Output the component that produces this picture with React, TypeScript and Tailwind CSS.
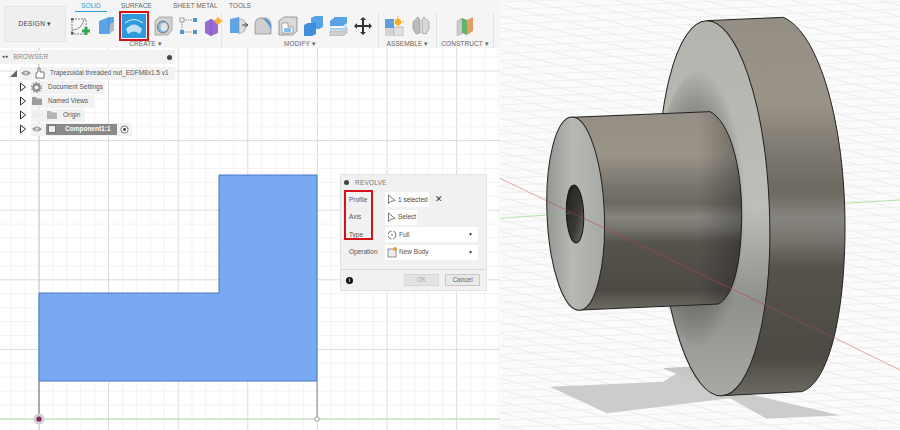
import React from "react";

const font = "font-['Liberation_Sans',Arial,sans-serif]";

const Group = ({ label, children, className }: { label: string; children: React.ReactNode; className: string }) => (
  <div className={`flex flex-col items-center h-[36px] border-r border-[#e2e2e2] ${className}`}>
    <div className="flex items-center h-[26px]">{children}</div>
    <div className="text-[6.5px] leading-[10px] text-[#666] tracking-[0.1px] whitespace-nowrap">{label} ▾</div>
  </div>
);

const Ico = ({ children, w = 20 }: { children: React.ReactNode; w?: number }) => (
  <svg width={w} height={20} viewBox="0 0 20 20" className="shrink-0">{children}</svg>
);

const TreeRow = ({ children, className = "" }: { children: React.ReactNode; className?: string }) => (
  <div className={`flex items-center h-[14px] ${className}`}>{children}</div>
);

const Arrow = () => (
  <svg width="8" height="10" viewBox="0 0 8 10" className="shrink-0"><path d="M1.5 1 L6.5 5 L1.5 9 Z" fill="#fff" stroke="#333" strokeWidth="1" /></svg>
);

const Eye = ({ faint }: { faint?: boolean }) => (
  <svg width="12" height="10" viewBox="0 0 12 10" className="shrink-0">
    <path d="M1 5 Q6 0 11 5 Q6 10 1 5Z" fill={faint ? "#e8e8e8" : "#999"} />
    <circle cx="6" cy="5" r="1.6" fill={faint ? "#f2f2f2" : "#ddd"} />
  </svg>
);

const Folder = ({ faint }: { faint?: boolean }) => (
  <svg width="12" height="10" viewBox="0 0 12 10" className="shrink-0">
    <path d="M1 1 H5 L6 2.5 H11 V9 H1Z" fill={faint ? "#b5b5b5" : "#9d9d9d"} />
  </svg>
);

const Cursor = () => (
  <svg width="9" height="11" viewBox="0 0 9 11" className="shrink-0"><path d="M1.5 1 V9.5 L3.5 7.5 L8 6.5 Z" fill="#fff" stroke="#555" strokeWidth="0.8" /></svg>
);

const Caret = () => <span className="ml-auto mr-[5px] text-[5px] text-[#333]">▼</span>;

const DialogRow = ({ label, children }: { label: string; children: React.ReactNode }) => (
  <div className="flex items-center h-[17.5px]">
    <div className="w-[44px] pl-[8px] text-[6.5px] text-[#555]">{label}</div>
    {children}
  </div>
);

const LeftGrid = () => {
  const xs = Array.from({ length: 37 }, (_, i) => 39 - 13.92 * 2 + i * 13.92);
  const ys = Array.from({ length: 29 }, (_, i) => 419 + 13.92 - i * 13.92);
  return (
    <svg width="500" height="382" viewBox="0 48 500 382" className="absolute inset-0">
      {xs.map((x, i) => <line key={i} x1={x} x2={x} y1="48" y2="430" stroke={(i - 2) % 5 === 0 ? "#dcdcdc" : "#f3f3f3"} strokeWidth="1" />)}
      {ys.map((y, i) => <line key={i} x1="0" x2="500" y1={y} y2={y} stroke={(i - 1) % 5 === 0 ? "#dcdcdc" : "#f3f3f3"} strokeWidth="1" />)}
      <line x1="39" x2="39" y1="48" y2="430" stroke="#c5cfdc" strokeWidth="1" />
      <line x1="0" x2="500" y1="419" y2="419" stroke="#b9e6b0" strokeWidth="1" />
      <path d="M39 293 H219 V175 H317 V381 H39 Z" fill="#79a9f2" stroke="#4a79bd" strokeWidth="1" />
      <line x1="39" x2="39" y1="381" y2="419" stroke="#77777f" strokeWidth="1" />
      <line x1="317" x2="317" y1="381" y2="419" stroke="#8a8a8a" strokeWidth="1" />
      <circle cx="39" cy="419" r="5.5" fill="#cfcfd2" />
      <circle cx="39" cy="419" r="2.6" fill="#8c1d5c" />
      <circle cx="317" cy="419" r="2.2" fill="#fff" stroke="#888" strokeWidth="0.8" />
    </svg>
  );
};

const Model = () => {
  const gridA = Array.from({ length: 62 }, (_, i) => i);
  const gridB = Array.from({ length: 60 }, (_, i) => i);
  return (
    <svg viewBox="0 0 1200 1290" className="w-[400px] h-[430px] block bg-[#fbfbfb]">
      <defs>
        <linearGradient id="cyl" x1="0" y1="0" x2="0" y2="1">
          <stop offset="0" stopColor="#948e84" />
          <stop offset="0.22" stopColor="#9a9388" />
          <stop offset="0.36" stopColor="#7c7870" />
          <stop offset="0.46" stopColor="#6c6961" />
          <stop offset="0.53" stopColor="#86847e" />
          <stop offset="0.58" stopColor="#7a7871" />
          <stop offset="0.66" stopColor="#56534d" />
          <stop offset="0.9" stopColor="#4d4a44" />
          <stop offset="1" stopColor="#6f6c65" />
        </linearGradient>
        <linearGradient id="hubFade" x1="0" y1="0" x2="1" y2="0">
          <stop offset="0" stopColor="#000" stopOpacity="0" />
          <stop offset="0.75" stopColor="#000" stopOpacity="0" />
          <stop offset="1" stopColor="#000" stopOpacity="0.28" />
        </linearGradient>
        <linearGradient id="face" x1="0" y1="0" x2="1" y2="0.15">
          <stop offset="0" stopColor="#8f8f8b" />
          <stop offset="0.5" stopColor="#b8b8b4" />
          <stop offset="1" stopColor="#a9a9a5" />
        </linearGradient>
        <linearGradient id="disc" x1="0" y1="0" x2="0" y2="1">
          <stop offset="0" stopColor="#b4b4ae" />
          <stop offset="0.5" stopColor="#bdbdb9" />
          <stop offset="0.75" stopColor="#8f8f8b" />
          <stop offset="1" stopColor="#a9a9a6" />
        </linearGradient>
        <radialGradient id="discShade" cx="0.42" cy="0.5" r="0.5">
          <stop offset="0.55" stopColor="#3c3c3a" stopOpacity="0.55" />
          <stop offset="1" stopColor="#3c3c3a" stopOpacity="0" />
        </radialGradient>
        <linearGradient id="hole" x1="0" y1="0" x2="1" y2="1">
          <stop offset="0" stopColor="#1e1e1c" />
          <stop offset="0.6" stopColor="#3a3936" />
          <stop offset="1" stopColor="#77756f" />
        </linearGradient>
      </defs>

      {gridB.map((i) => (
        <line key={`b${i}`} x1="-100" y1={-420 + i * 34} x2="1300" y2={-60 + i * 34} stroke="#dedede" strokeWidth="1.5" />
      ))}
      {gridA.map((i) => (
        <line key={`a${i}`} x1="-100" y1={10 + i * 22} x2="1300" y2={-42 + i * 22} stroke="#e4e4e4" strokeWidth="1.5" />
      ))}

      <path d="M150 1160 L490 1145 L560 1100 L490 1105 L590 1142 L760 1185 L1020 1246 L800 1256 L690 1195 L320 1240 Z" fill="#c7c7c5" opacity="0.9" />
      <path d="M488 1105 L570 1100 L660 1150 L590 1145Z" fill="#c7c7c5" />

      <line x1="0" y1="655" x2="210" y2="640" stroke="#b4e2a8" strokeWidth="3" />
      <line x1="1030" y1="610" x2="1200" y2="600" stroke="#b4e2a8" strokeWidth="3" />
      <line x1="0" y1="535" x2="150" y2="607" stroke="#e3a6a6" strokeWidth="3" />
      <line x1="1000" y1="1012" x2="1200" y2="1110" stroke="#e3a6a6" strokeWidth="3" />

      {/* large disc */}
      <path d="M620 62 L850 52 C960 100 1035 380 1035 680 C1035 950 985 1150 905 1175 L665 1187 Z" fill="url(#cyl)" stroke="#222" strokeWidth="3" />
      <ellipse cx="642" cy="625" rx="166" ry="563" transform="rotate(-2.3 642 625)" fill="url(#disc)" stroke="#222" strokeWidth="3" />
      <ellipse cx="610" cy="625" rx="150" ry="420" fill="url(#discShade)" />

      {/* hub */}
      <path d="M215 352 L630 335 C690 365 725 500 725 640 C725 790 700 890 655 912 L240 930 Z" fill="url(#cyl)" stroke="#222" strokeWidth="3" />
      <path d="M215 352 L630 335 C690 365 725 500 725 640 C725 790 700 890 655 912 L240 930 Z" fill="url(#hubFade)" />
      <ellipse cx="227" cy="641" rx="86" ry="290" transform="rotate(-2.3 227 641)" fill="url(#face)" stroke="#222" strokeWidth="3" />
      <ellipse cx="225" cy="642" rx="26" ry="87" transform="rotate(-2.3 225 642)" fill="url(#hole)" stroke="#151515" strokeWidth="3" />

      <line x1="140" y1="602" x2="1000" y2="1012" stroke="#b04a4e" strokeWidth="3" opacity="0.55" />
      <line x1="140" y1="645" x2="210" y2="640" stroke="#8fc98a" strokeWidth="2" opacity="0.5" />
    </svg>
  );
};

export default function App() {
  return (
    <div className={`flex w-[900px] h-[430px] overflow-hidden bg-white ${font}`}>
      <div className="w-[500px] h-[430px] flex flex-col shrink-0">
        {/* toolbar */}
        <div className="h-[48px] flex bg-[#f5f5f5] shrink-0">
          <div className="w-[62px] h-[36px] mt-[6px] ml-[4px] mr-[4px] bg-[#efefef] border border-[#e4e4e4] rounded-[2px] flex items-center justify-center text-[6.5px] text-[#444] tracking-[0.3px]">
            DESIGN ▾
          </div>
          <div className="flex flex-col">
            <div className="flex h-[10px] text-[6.5px] leading-[12px] text-[#666] whitespace-nowrap">
              <div className="w-[32px] ml-[5px] text-center text-[#2b9bd6] border-b border-[#2b9bd6] h-[12px]">SOLID</div>
              <div className="ml-[14px] w-[30px] text-center">SURFACE</div>
              <div className="ml-[22px] w-[42px] text-center">SHEET METAL</div>
              <div className="ml-[14px]">TOOLS</div>
            </div>
            <div className="flex mt-[3px]">
              <Group label="CREATE" className="w-[152px]">
                <div className="flex items-center gap-[5px] pl-[2px]">
                  <Ico>
                    <path d="M2 3 H16 V18 H2Z" fill="none" stroke="#666" strokeWidth="0.8" strokeDasharray="2 1" />
                    <path d="M2 14 Q12 14 14 3" fill="none" stroke="#777" strokeWidth="0.8" />
                    <rect x="1" y="2" width="2.5" height="2.5" fill="#555" /><rect x="1" y="16" width="2.5" height="2.5" fill="#555" />
                    <path d="M12 15 H20 M16 11 V19" stroke="#2fa84f" strokeWidth="3" />
                  </Ico>
                  <Ico>
                    <path d="M4 5 L14 1 H19 V14 L14 18 H4Z" fill="#5aa5e6" />
                    <path d="M14 2 V18" stroke="#3f85c8" strokeWidth="0.8" />
                    <path d="M14 18 L19 14 V6 L15 8Z" fill="#b9b9b9" />
                  </Ico>
                  <div className="relative w-[24px] h-[24px] bg-[#2e9ade] shrink-0 mx-[2px] flex items-center justify-center">
                    <svg width="22" height="22" viewBox="0 0 22 22">
                      <path d="M3 14 Q11 5 19 14 L17 19 Q11 14 5 19Z" fill="#bfe0f5" />
                      <path d="M2 8 Q11 1 20 8" fill="none" stroke="#e8f4fb" strokeWidth="1" />
                    </svg>
                    <div className="absolute -inset-[3px] border-2 border-[#d5121a]" />
                  </div>
                  <Ico>
                    <path d="M2 5 L6 1 H19 V14 L15 19 H2Z" fill="#d2d2d2" stroke="#888" strokeWidth="0.6" />
                    <ellipse cx="10" cy="11" rx="5.5" ry="6" fill="#8fb7dd" stroke="#666" strokeWidth="0.8" />
                    <ellipse cx="11" cy="11" rx="3.5" ry="4" fill="#e4e4e4" />
                  </Ico>
                  <Ico>
                    <path d="M5 4 H16 M4 5 V16 M5 16 H16" stroke="#666" strokeWidth="0.7" strokeDasharray="1.5 1" fill="none" />
                    <rect x="2" y="2" width="4" height="4" fill="#f7f7f7" stroke="#777" strokeWidth="0.7" />
                    <rect x="15" y="2" width="4" height="4" fill="#4f95d6" />
                    <rect x="2" y="14" width="4" height="4" fill="#4f95d6" />
                    <rect x="15" y="14" width="4" height="4" fill="#4f95d6" />
                  </Ico>
                  <Ico>
                    <path d="M2 6 L8 3 L15 6 V17 L8 20 L2 17Z" fill="#9a6bd0" />
                    <path d="M8 3 V20" stroke="#7d50b5" strokeWidth="0.8" />
                    <circle cx="15" cy="5" r="3" fill="#f3b23a" />
                    <path d="M15 0 V10 M10 5 H20" stroke="#f3b23a" strokeWidth="0.8" />
                  </Ico>
                </div>
              </Group>
              <Group label="MODIFY" className="w-[157px]">
                <div className="flex items-center gap-[5px]">
                  <Ico><path d="M2 3 L11 1 V17 H2Z" fill="#5ea5e6" /><path d="M11 2 L17 5 V15 L11 18Z" fill="#ddd" stroke="#888" strokeWidth="0.5" /><path d="M14 9 H20 M17 7 L20 9 L17 11" stroke="#444" strokeWidth="0.9" fill="none" /></Ico>
                  <Ico><path d="M2 18 V8 Q2 2 8 2 L14 2 Q19 5 18 12 V18Z" fill="#cfcfcf" stroke="#777" strokeWidth="0.6" /><path d="M9 2 Q19 3 18 14 Q15 6 9 2Z" fill="#4f95d6" /></Ico>
                  <Ico><path d="M1 5 L6 1 H19 V15 L15 19 H1Z" fill="#dadada" stroke="#777" strokeWidth="0.7" /><path d="M4 7 H10 V11 H15 V17 H4Z" fill="#fff" stroke="#555" strokeWidth="0.5" /><path d="M6 12 H13 V16 H6Z" fill="#7fc0ee" /></Ico>
                  <Ico><path d="M8 2 L12 0 H20 V11 L16 13 H8Z" fill="#57a3e6" /><path d="M1 9 L5 7 H13 V18 L9 20 H1Z" fill="#3f90dc" /></Ico>
                  <Ico><path d="M2 5 L7 1 H19 V7 L15 10 H2Z" fill="#57a3e6" /><path d="M2 12 H15 L19 9 V11 L15 14 H2Z" fill="#a8d0f0" /><path d="M2 15 H15 L19 12 V17 L15 20 H2Z" fill="#cfcfcf" stroke="#888" strokeWidth="0.4" /></Ico>
                  <Ico><path d="M10 1 L13 4 H11 V9 H16 V7 L19 10 L16 13 V11 H11 V16 H13 L10 19 L7 16 H9 V11 H4 V13 L1 10 L4 7 V9 H9 V4 H7Z" fill="#333" /></Ico>
                </div>
              </Group>
              <Group label="ASSEMBLE" className="w-[58px]">
                <div className="flex items-center gap-[7px]">
                  <Ico><rect x="1" y="3" width="9" height="9" fill="#5a9fe0" /><rect x="1" y="12" width="9" height="8" fill="#d5d5d5" /><rect x="10" y="11" width="9" height="9" fill="#e2e2e2" stroke="#999" strokeWidth="0.5" /><circle cx="14" cy="6" r="3.2" fill="#f2ae2e" /><path d="M14 0 V12 M8 6 H20" stroke="#f2ae2e" strokeWidth="0.8" /></Ico>
                  <Ico><path d="M2 6 L7 1 L9 4 V17 L5 18 L2 13Z" fill="#bdbdbd" stroke="#888" strokeWidth="0.6" /><path d="M18 6 L13 1 L11 4 V17 L15 18 L18 13Z" fill="#d8d8d8" stroke="#888" strokeWidth="0.6" /></Ico>
                </div>
              </Group>
              <Group label="CONSTRUCT" className="w-[57px]">
                <Ico>
                  <path d="M2 5 L7 2 V18 L2 20Z" fill="#ccc" stroke="#999" strokeWidth="0.4" />
                  <path d="M7 2 L12 4 V19 L7 17Z" fill="#63b56b" />
                  <path d="M12 4 L18 1 V15 L12 19Z" fill="#e69b63" />
                </Ico>
              </Group>
            </div>
          </div>
        </div>

        {/* canvas */}
        <div className="relative flex-1 bg-white overflow-hidden">
          <LeftGrid />

          {/* browser tree */}
          <div className="absolute left-0 top-[2px] w-[175px] text-[6.5px] text-[#555]">
            <div className="h-[14px] bg-[#f2f2f2] flex items-center pl-[2px] text-[#888] tracking-[0.2px]">
              <span className="text-[5px] text-[#444] mr-[5px]">◂◂</span>
              BROWSER
              <span className="ml-auto mr-[3px] w-[5px] h-[5px] rounded-full bg-[#444]" />
            </div>
            <div className="flex flex-col mt-[2px]">
              <TreeRow>
                <svg width="8" height="8" viewBox="0 0 8 8" className="ml-[10px] shrink-0"><path d="M0 8 L7 1 V8Z" fill="#666" /></svg>
                <div className="ml-[2px] flex items-center bg-[#f2f2f2] h-[13px] flex-1 whitespace-nowrap">
                  <Eye />
                  <svg width="10" height="12" viewBox="0 0 10 12" className="ml-[3px] shrink-0"><path d="M3 1 H5 V5 H9 V11 H1 V6 L3 5Z" fill="#fff" stroke="#555" strokeWidth="0.8" /></svg>
                  <span className="ml-[5px]">Trapezoidal threaded nut_EDFM8x1.5 v1</span>
                </div>
              </TreeRow>
              <TreeRow className="pl-[19px]">
                <Arrow />
                <div className="ml-[4px] flex items-center bg-[#f2f2f2] h-[13px] pr-[2px]">
                  <svg width="11" height="11" viewBox="0 0 11 11" className="shrink-0"><circle cx="5.5" cy="5.5" r="3.2" fill="none" stroke="#888" strokeWidth="2.2" /><circle cx="5.5" cy="5.5" r="4.9" fill="none" stroke="#888" strokeWidth="1.1" strokeDasharray="1.5 1.6" /></svg>
                  <span className="ml-[6px]">Document Settings</span>
                </div>
              </TreeRow>
              <TreeRow className="pl-[19px]">
                <Arrow />
                <div className="ml-[4px] flex items-center bg-[#f2f2f2] h-[13px] pr-[6px]">
                  <Folder />
                  <span className="ml-[5px]">Named Views</span>
                </div>
              </TreeRow>
              <TreeRow className="pl-[19px]">
                <Arrow />
                <div className="ml-[4px] flex items-center bg-[#f2f2f2] h-[13px] pr-[5px]">
                  <Eye faint />
                  <span className="w-[3px]" />
                  <Folder faint />
                  <span className="ml-[5px]">Origin</span>
                </div>
              </TreeRow>
              <TreeRow className="pl-[19px]">
                <Arrow />
                <div className="ml-[4px] flex items-center bg-[#f2f2f2] h-[13px] pr-[3px]">
                  <Eye />
                  <div className="ml-[3px] h-[11px] w-[71px] bg-[#8a8a8a] flex items-center text-white font-bold">
                    <span className="ml-[2px] w-[8px] h-[8px] bg-[#eee] border border-[#777] shrink-0" />
                    <span className="ml-[9px]">Component1:1</span>
                  </div>
                  <svg width="9" height="9" viewBox="0 0 9 9" className="ml-[3px] shrink-0"><circle cx="4.5" cy="4.5" r="3.6" fill="#fff" stroke="#555" strokeWidth="0.8" /><circle cx="4.5" cy="4.5" r="1.4" fill="#333" /></svg>
                </div>
              </TreeRow>
            </div>
          </div>

          {/* revolve dialog */}
          <div className="absolute left-[340px] top-[126px] w-[147px] h-[117px] bg-[#f1f1f1] border border-[#e4e4e4] flex flex-col">
            <div className="h-[15px] flex items-center pl-[3px] text-[6.5px] text-[#777] tracking-[0.2px]">
              <span className="w-[5px] h-[5px] rounded-full bg-[#444] mr-[6px]" />
              REVOLVE
            </div>
            <div className="relative flex flex-col mt-[0px] pt-[1px]">
              <div className="absolute left-[3px] top-[0px] w-[29px] h-[50px] border-2 border-[#d5121a]" />
              <DialogRow label="Profile">
                <div className="w-[44px] h-[15px] bg-white flex items-center pl-[2px] text-[6.5px] text-[#444]">
                  <Cursor /><span className="ml-[2px] whitespace-nowrap">1 selected</span>
                </div>
                <span className="ml-[6px] text-[9px] leading-none text-[#333]">✕</span>
              </DialogRow>
              <DialogRow label="Axis">
                <div className="w-[32px] h-[15px] bg-white flex items-center pl-[2px] text-[6.5px] text-[#444]">
                  <Cursor /><span className="ml-[2px]">Select</span>
                </div>
              </DialogRow>
              <DialogRow label="Type">
                <div className="w-[93px] h-[15px] bg-white flex items-center pl-[2px] text-[6.5px] text-[#555]">
                  <svg width="10" height="10" viewBox="0 0 10 10" className="shrink-0"><circle cx="5" cy="5" r="4" fill="none" stroke="#555" strokeWidth="0.8" strokeDasharray="5 1.5" /><circle cx="5" cy="5" r="0.8" fill="#555" /></svg>
                  <span className="ml-[2px]">Full</span><Caret />
                </div>
              </DialogRow>
              <DialogRow label="Operation">
                <div className="w-[93px] h-[15px] bg-white flex items-center pl-[2px] text-[6.5px] text-[#555]">
                  <svg width="10" height="11" viewBox="0 0 10 11" className="shrink-0"><rect x="1" y="2" width="8" height="8" fill="#eee" stroke="#666" strokeWidth="0.7" /><circle cx="8" cy="2" r="2" fill="#ee9a3a" /></svg>
                  <span className="ml-[2px] whitespace-nowrap">New Body</span><Caret />
                </div>
              </DialogRow>
            </div>
            <div className="mt-auto h-[21px] border-t border-[#d8d8d8] flex items-center pl-[5px]">
              <span className="w-[7px] h-[7px] rounded-full bg-[#111] text-white text-[5px] leading-[7px] text-center font-bold">i</span>
              <div className="ml-[51px] w-[35px] h-[12px] bg-[#e3e3e3] border border-[#d6d6d6] text-[6.5px] leading-[10px] text-center text-[#aaa]">OK</div>
              <div className="ml-[6px] w-[35px] h-[12px] bg-[#e9e9e9] border border-[#c8c8c8] text-[6.5px] leading-[10px] text-center text-[#666]">Cancel</div>
            </div>
          </div>
        </div>
      </div>
      <div className="w-[400px] h-[430px] shrink-0">
        <Model />
      </div>
    </div>
  );
}
